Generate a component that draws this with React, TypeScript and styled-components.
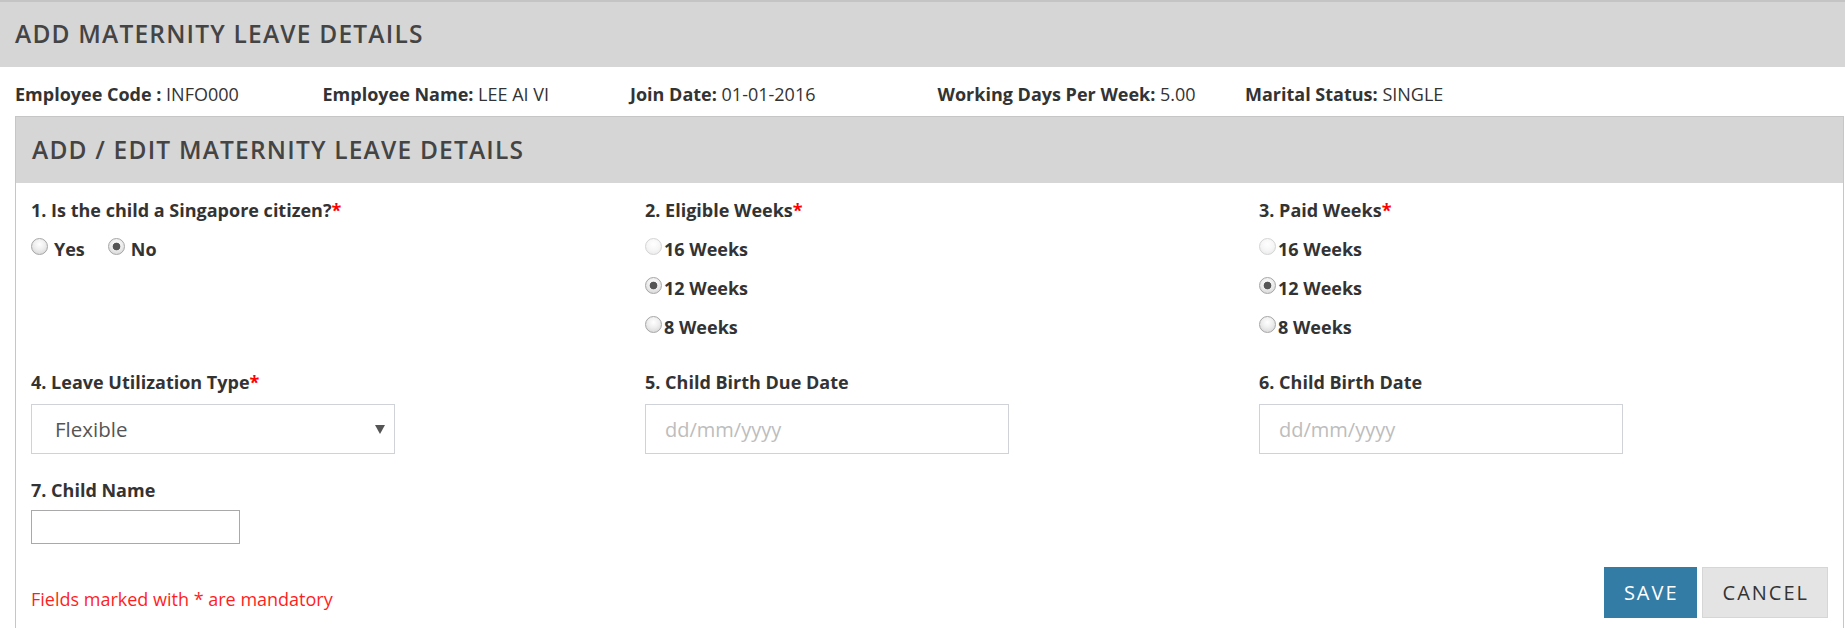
import React from "react";
import styled, { createGlobalStyle } from "styled-components";

const GlobalStyle = createGlobalStyle`
  html, body { margin: 0; padding: 0; background: #ffffff; }
  body { font-family: "Open Sans", "Liberation Sans", sans-serif; color: #333; }
  * { box-sizing: border-box; }
`;

const Page = styled.div`
  width: 1845px;
  min-height: 628px;
  overflow: hidden;
`;

const TopHeader = styled.div`
  height: 67px;
  background: #d6d6d6;
  border-top: 2px solid #c4c4c4;
  display: flex;
  align-items: center;
  padding-left: 15px;
`;

const Title = styled.h1`
  margin: 0;
  font-size: 24.5px;
  font-weight: 600;
  letter-spacing: 1.2px;
  color: #444;
  text-transform: uppercase;
  line-height: 1;
`;

const InfoRow = styled.div`
  height: 49px;
  padding-top: 15px;
  display: grid;
  grid-template-columns: repeat(6, 1fr);
`;

const InfoItem = styled.div`
  padding-left: 15px;
  font-size: 18px;
  line-height: 25px;
  color: #333;
  white-space: nowrap;
`;

const InfoKey = styled.b`
  font-weight: 700;
`;

const Panel = styled.section`
  margin-left: 15px;
  width: 1829px;
  min-height: 512px;
  border: 1px solid #c6c6c6;
  border-bottom: none;
`;

const PanelHeading = styled.div`
  height: 66px;
  background: #d6d6d6;
  display: flex;
  align-items: center;
  padding-left: 16px;
`;

const PanelBody = styled.div`
  padding: 14px 15px 0;
`;

const FieldGrid = styled.div`
  display: grid;
  grid-template-columns: 614px 614px 1fr;
  row-gap: 23px;
`;

const Field = styled.div`
  display: flex;
  flex-direction: column;
  align-items: flex-start;
`;

const Label = styled.label`
  font-size: 18px;
  font-weight: 700;
  line-height: 26px;
  color: #333;
`;

const Req = styled.span`
  color: #ff0000;
`;

const RadioStack = styled.div`
  display: flex;
  flex-direction: column;
  padding-bottom: 6px;
`;

const RadioInline = styled.div`
  display: flex;
  gap: 23px;
  margin-top: 13px;
`;

const RadioOption = styled.label<{ $gap: number; $stacked?: boolean }>`
  display: flex;
  align-items: center;
  gap: ${(p) => p.$gap}px;
  height: 26px;
  margin-top: ${(p) => (p.$stacked ? 13 : 0)}px;
  font-size: 18px;
  font-weight: 700;
  color: #333;
`;

const Radio = styled.input.attrs({ type: "radio" })`
  appearance: none;
  -webkit-appearance: none;
  margin: 0 0 6px 0;
  width: 17px;
  height: 17px;
  border-radius: 50%;
  border: 1px solid #a6a6a6;
  background: radial-gradient(circle at 50% 35%, #ffffff 0%, #eeeeee 45%, #cfcfcf 100%);
  flex: none;
  &:checked {
    background: radial-gradient(circle, #555 0, #555 3.5px, transparent 4.2px),
      radial-gradient(circle at 50% 35%, #ffffff 0%, #eeeeee 45%, #cfcfcf 100%);
  }
  &:disabled {
    border-color: #d4d4d4;
    background: radial-gradient(circle at 50% 35%, #ffffff 0%, #f6f6f6 50%, #e6e6e6 100%);
  }
`;

const Control = styled.div`
  position: relative;
  margin-top: 9px;
`;

const Select = styled.select`
  appearance: none;
  -webkit-appearance: none;
  width: 364px;
  height: 50px;
  border: 1px solid #d0d2da;
  background: #fff;
  padding-left: 23px;
  font-family: "Open Sans", "Liberation Sans", sans-serif;
  font-size: 20.5px;
  color: #555;
  outline: none;
`;

const Caret = styled.span`
  position: absolute;
  right: 10px;
  top: 21px;
  width: 0;
  height: 0;
  border-left: 5px solid transparent;
  border-right: 5px solid transparent;
  border-top: 9px solid #555;
  pointer-events: none;
`;

const DateInput = styled.input`
  width: 364px;
  height: 50px;
  margin-top: 9px;
  border: 1px solid #d0d2da;
  padding-left: 19px;
  font-family: "Open Sans", "Liberation Sans", sans-serif;
  font-size: 20px;
  color: #555;
  outline: none;
  &::placeholder {
    color: #bdbdbd;
  }
`;

const TextInput = styled.input`
  width: 209px;
  height: 34px;
  margin-top: 7px;
  border: 1px solid #a9a9a9;
  font-family: "Open Sans", "Liberation Sans", sans-serif;
  font-size: 16px;
  outline: none;
`;

const Footer = styled.div`
  display: flex;
  justify-content: space-between;
  align-items: flex-end;
  margin-top: 23px;
`;

const Mandatory = styled.p`
  margin: 0 0 6px;
  font-size: 18px;
  line-height: 26px;
  color: #ff1e1e;
`;

const Actions = styled.div`
  display: flex;
  gap: 5px;
`;

const Button = styled.button<{ $primary?: boolean }>`
  height: 51px;
  padding: 0 ${(p) => (p.$primary ? 17 : 18)}px 0 ${(p) => (p.$primary ? 19 : 20)}px;
  font-family: "Open Sans", "Liberation Sans", sans-serif;
  font-size: 20px;
  letter-spacing: 2px;
  text-transform: uppercase;
  cursor: pointer;
  background: ${(p) => (p.$primary ? "#337ca6" : "#e4e4e4")};
  color: ${(p) => (p.$primary ? "#ffffff" : "#333333")};
  border: 1px solid ${(p) => (p.$primary ? "#337ca6" : "#d6d6d6")};
`;

const info: [string, string][] = [
  ["Employee Code : ", "INFO000"],
  ["Employee Name: ", "LEE AI VI"],
  ["Join Date: ", "01-01-2016"],
  ["Working Days Per Week: ", "5.00"],
  ["Marital Status: ", "SINGLE"],
];

function WeeksGroup({ name }: { name: string }) {
  return (
    <RadioStack>
      <RadioOption $gap={2} $stacked>
        <Radio name={name} disabled />
        16 Weeks
      </RadioOption>
      <RadioOption $gap={2} $stacked>
        <Radio name={name} defaultChecked />
        12 Weeks
      </RadioOption>
      <RadioOption $gap={2} $stacked>
        <Radio name={name} />
        8 Weeks
      </RadioOption>
    </RadioStack>
  );
}

export default function App() {
  return (
    <Page>
      <GlobalStyle />
      <TopHeader>
        <Title>Add Maternity Leave Details</Title>
      </TopHeader>
      <InfoRow>
        {info.map(([k, v]) => (
          <InfoItem key={k}>
            <InfoKey>{k}</InfoKey>
            {v}
          </InfoItem>
        ))}
      </InfoRow>
      <Panel>
        <PanelHeading>
          <Title as="h2">Add / Edit Maternity Leave Details</Title>
        </PanelHeading>
        <PanelBody>
          <FieldGrid>
            <Field>
              <Label>
                1. Is the child a Singapore citizen?<Req>*</Req>
              </Label>
              <RadioInline>
                <RadioOption $gap={6}>
                  <Radio name="citizen" />
                  Yes
                </RadioOption>
                <RadioOption $gap={6}>
                  <Radio name="citizen" defaultChecked />
                  No
                </RadioOption>
              </RadioInline>
            </Field>
            <Field>
              <Label>
                2. Eligible Weeks<Req>*</Req>
              </Label>
              <WeeksGroup name="eligible" />
            </Field>
            <Field>
              <Label>
                3. Paid Weeks<Req>*</Req>
              </Label>
              <WeeksGroup name="paid" />
            </Field>

            <Field>
              <Label>
                4. Leave Utilization Type<Req>*</Req>
              </Label>
              <Control>
                <Select defaultValue="Flexible">
                  <option>Flexible</option>
                  <option>Continuous</option>
                </Select>
                <Caret />
              </Control>
            </Field>
            <Field>
              <Label>5. Child Birth Due Date</Label>
              <DateInput type="text" placeholder="dd/mm/yyyy" />
            </Field>
            <Field>
              <Label>6. Child Birth Date</Label>
              <DateInput type="text" placeholder="dd/mm/yyyy" />
            </Field>

            <Field>
              <Label>7. Child Name</Label>
              <TextInput type="text" />
            </Field>
          </FieldGrid>
          <Footer>
            <Mandatory>Fields marked with * are mandatory</Mandatory>
            <Actions>
              <Button $primary>Save</Button>
              <Button>Cancel</Button>
            </Actions>
          </Footer>
        </PanelBody>
      </Panel>
    </Page>
  );
}
